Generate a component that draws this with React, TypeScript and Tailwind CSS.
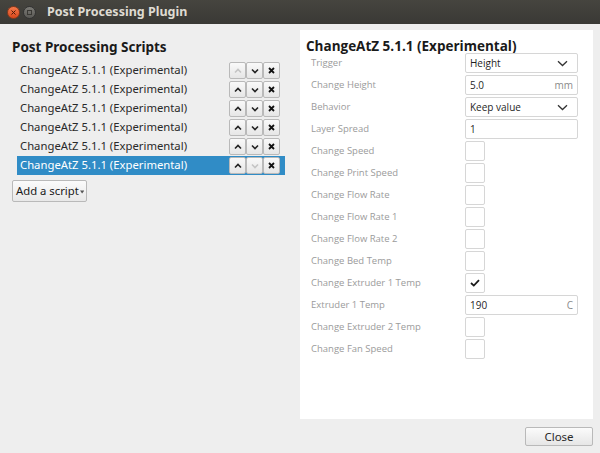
const scripts = [0, 1, 2, 3, 4, 5];

type Setting = {
    label: string;
    kind: "select" | "text" | "check";
    value?: string;
    unit?: string;
    checked?: boolean;
};

const settings: Setting[] = [
    { label: "Trigger", kind: "select", value: "Height" },
    { label: "Change Height", kind: "text", value: "5.0", unit: "mm" },
    { label: "Behavior", kind: "select", value: "Keep value" },
    { label: "Layer Spread", kind: "text", value: "1" },
    { label: "Change Speed", kind: "check" },
    { label: "Change Print Speed", kind: "check" },
    { label: "Change Flow Rate", kind: "check" },
    { label: "Change Flow Rate 1", kind: "check" },
    { label: "Change Flow Rate 2", kind: "check" },
    { label: "Change Bed Temp", kind: "check" },
    { label: "Change Extruder 1 Temp", kind: "check", checked: true },
    { label: "Extruder 1 Temp", kind: "text", value: "190", unit: "C" },
    { label: "Change Extruder 2 Temp", kind: "check" },
    { label: "Change Fan Speed", kind: "check" },
];

const Chevron = ({ up, disabled }: { up?: boolean; disabled?: boolean }) => (
    <svg width="8" height="6" viewBox="0 0 8 6">
        <polyline
            points={up ? "1,4.5 4,1.5 7,4.5" : "1,1.5 4,4.5 7,1.5"}
            fill="none"
            stroke={disabled ? "#c4c4c4" : "#222"}
            strokeWidth="1.6"
        />
    </svg>
);

const Cross = () => (
    <svg width="7" height="7" viewBox="0 0 7 7">
        <path d="M1 1 L6 6 M6 1 L1 6" stroke="#111" strokeWidth="1.8" />
    </svg>
);

const SmallButton = ({ children }: { children: React.ReactNode }) => (
    <div className="w-[17px] h-[17px] flex items-center justify-center border border-[#b9b9b9] rounded-[2px] bg-gradient-to-b from-[#f9f9f9] to-[#e6e6e6]">
        {children}
    </div>
);

const SettingControl = ({ s }: { s: Setting }) => {
    if (s.kind === "check") {
        return (
            <div className="w-[20px] h-[20px] border border-[#d6d6d6] rounded-[2px] bg-white flex items-center justify-center">
                {s.checked && (
                    <svg width="10" height="8" viewBox="0 0 10 8">
                        <path d="M1 4 L3.8 6.6 L9 1.2" fill="none" stroke="#1a1a1a" strokeWidth="1.8" />
                    </svg>
                )}
            </div>
        );
    }
    return (
        <div className="w-[113px] h-[20px] border border-[#d6d6d6] rounded-[2px] bg-white flex items-center justify-between pl-[4px] pr-[4px] text-[10px] text-[#1f1f1f]">
            <span>{s.value}</span>
            {s.kind === "select" ? (
                <svg width="11" height="7" viewBox="0 0 11 7" className="mr-[5px]">
                    <polyline points="1,1.2 5.5,5.5 10,1.2" fill="none" stroke="#333" strokeWidth="1.3" />
                </svg>
            ) : (
                <span className="text-[#8a8a8a]">{s.unit}</span>
            )}
        </div>
    );
};

export default function App() {
    return (
        <div className="w-[600px] h-[453px] bg-[#eeeeee] flex flex-col overflow-hidden" style={{ fontFamily: '"Noto Sans", sans-serif' }}>
            <div className="h-[24px] bg-gradient-to-b from-[#46453f] to-[#3a3935] flex items-center pl-[7px] shrink-0">
                <div className="w-[13px] h-[13px] rounded-full bg-gradient-to-b from-[#f5794a] to-[#d9471a] border border-[#8a3a1c] flex items-center justify-center">
                    <svg width="5" height="5" viewBox="0 0 5 5">
                        <path d="M0.5 0.5 L4.5 4.5 M4.5 0.5 L0.5 4.5" stroke="#4a1a0a" strokeWidth="1" />
                    </svg>
                </div>
                <div className="w-[13px] h-[13px] rounded-full bg-gradient-to-b from-[#7b7a75] to-[#5a5955] border border-[#333] ml-[3px] flex items-center justify-center">
                    <div className="w-[5px] h-[5px] border border-[#3a3935]" />
                </div>
                <span className="ml-[11px] text-[12.5px] font-bold text-[#dfdbd2]">
                    Post Processing Plugin
                </span>
            </div>

            <div className="flex flex-1 pt-[6px]">
                <div className="w-[300px] pl-[12px] pr-[15px]">
                    <h1 className="text-[13.5px] font-bold text-[#1a1a1a] leading-[20px] mt-[7px]">Post Processing Scripts</h1>
                    <div className="mt-[4px] ml-[5px] flex flex-col">
                        {scripts.map((i) => {
                            const selected = i === scripts.length - 1;
                            return (
                                <div
                                    key={i}
                                    className={`h-[19px] flex items-center justify-between pl-[3px] pr-[5px] ${selected ? "bg-[#308cc6] text-white" : "text-[#2a2a2a]"}`}
                                >
                                    <span className="text-[11.3px]">ChangeAtZ 5.1.1 (Experimental)</span>
                                    <div className="flex">
                                        <SmallButton>
                                            <Chevron up disabled={i === 0} />
                                        </SmallButton>
                                        <SmallButton>
                                            <Chevron disabled={selected} />
                                        </SmallButton>
                                        <SmallButton>
                                            <Cross />
                                        </SmallButton>
                                    </div>
                                </div>
                            );
                        })}
                    </div>
                    <button className="mt-[5px] h-[22px] w-[75px] pl-[3px] pr-[2px] whitespace-nowrap border border-[#b9b9b9] rounded-[2px] bg-gradient-to-b from-[#fbfbfb] to-[#e8e8e8] flex items-center justify-start text-[11.3px] text-[#1a1a1a]">
                        Add a script
                        <svg width="6" height="4" viewBox="0 0 6 4" className="ml-[1px] mt-[2px]">
                            <polygon points="0,0 6,0 3,4" fill="#555" />
                        </svg>
                    </button>
                </div>

                <div className="w-[293px] h-[389px] bg-white pl-[6px]" style={{ fontFamily: '"Open Sans", sans-serif' }}>
                    <h2 className="text-[13.5px] font-bold text-[#1a1a1a] leading-[20px] mt-[6px]">ChangeAtZ 5.1.1 (Experimental)</h2>
                    <div className="flex flex-col gap-[2px] mt-[-3px]">
                        {settings.map((s) => (
                            <div key={s.label} className="flex items-center h-[20px]">
                                <span className="w-[159px] pl-[5px] text-[9.5px] text-[#9b9b9b]">{s.label}</span>
                                <SettingControl s={s} />
                            </div>
                        ))}
                    </div>
                </div>
            </div>

            <div className="h-[34px] flex items-start justify-end pr-[7px] pt-[8px] shrink-0">
                <button className="w-[68px] h-[19px] border border-[#b9b9b9] rounded-[2px] bg-gradient-to-b from-[#fbfbfb] to-[#e6e6e6] text-[11.5px] text-[#2a2a2a]">
                    Close
                </button>
            </div>
        </div>
    );
}
